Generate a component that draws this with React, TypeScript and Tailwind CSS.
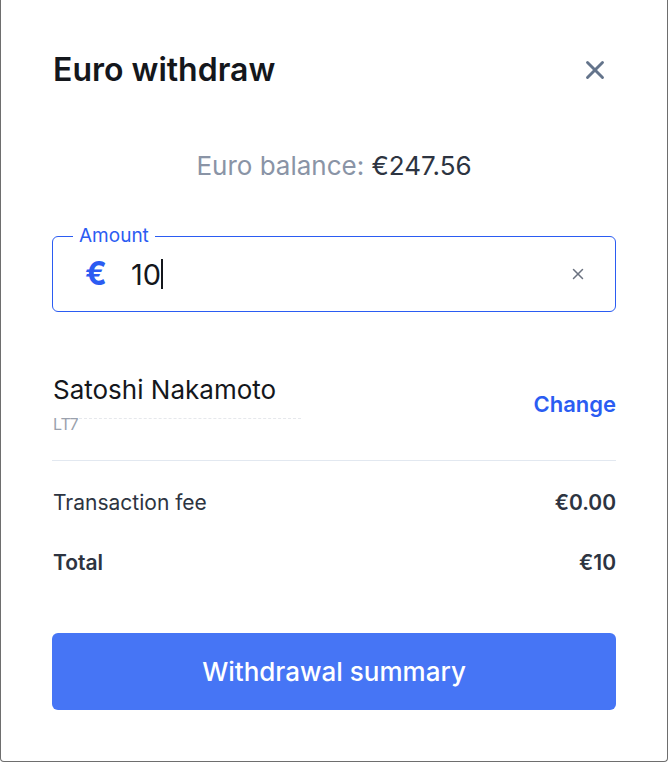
import { X } from 'lucide-react';

export default function App() {
    return (
        <div className="w-[668px] h-[762px] bg-white" style={{ fontFamily: 'Inter, "Noto Sans", sans-serif' }}>
            <div className="h-full border-x border-b border-[#6e6e6e] rounded-b-[4px] px-[51px] pt-[50px] flex flex-col">
                {/* Header */}
                <div className="flex items-center justify-between h-[40px]">
                    <h1 className="ml-[1px] text-[32px] font-semibold text-[#14171c]">Euro withdraw</h1>
                    <button className="text-[#64748b] mr-[6px]">
                        <X size={30} strokeWidth={2.3} />
                    </button>
                </div>

                {/* Balance */}
                <p className="mt-[60px] h-[32px] leading-[32px] text-center text-[26px] text-[#8a94a6]">
                    Euro balance: <span className="text-[#2d3441]">€247.56</span>
                </p>

                {/* Amount input */}
                <div className="relative mt-[54px] h-[76px] rounded-[6px] border border-[#2b5cf2] flex items-center pl-[32px] pr-[28px]">
                    <span className="absolute -top-[13px] left-[20px] px-[6px] bg-white text-[19px] leading-[24px] text-[#2b5cf2]">Amount</span>
                    <span className="text-[32px] font-bold text-[#2b5cf2] leading-none">€</span>
                    <span className="ml-[24px] text-[29px] text-[#14171c] leading-none flex items-center">
                        10<span className="inline-block w-[1.5px] h-[30px] bg-[#14171c]" />
                    </span>
                    <span className="ml-auto text-[#6b7280]">
                        <X size={18} strokeWidth={2} />
                    </span>
                </div>

                {/* Recipient */}
                <div className="mt-[63px] flex items-center justify-between">
                    <div className="ml-[1px]">
                        <p className="h-[30px] leading-[30px] text-[26px] text-[#14171c]">Satoshi Nakamoto</p>
                        <div className="h-[20px] mt-[9px] flex items-start">
                            <span className="text-[16px] leading-[20px] text-[#9aa1ad]">LT7</span>
                            <span className="mt-[4px] w-[222px] border-t border-dashed border-[#e6e8ec]" />
                        </div>
                    </div>
                    <button className="text-[22px] font-semibold text-[#2b5cf2]">Change</button>
                </div>

                <div className="mt-[26px] h-px bg-[#e2e8f0]" />

                {/* Summary rows */}
                <div className="ml-[1px] mt-[28px] flex items-center justify-between h-[28px] text-[21px] text-[#2d3441]">
                    <span>Transaction fee</span>
                    <span className="font-semibold">€0.00</span>
                </div>
                <div className="ml-[1px] mt-[32px] flex items-center justify-between h-[28px] text-[21px] text-[#2d3441] font-semibold">
                    <span>Total</span>
                    <span>€10</span>
                </div>

                <button className="mt-[56px] h-[77px] w-full rounded-[6px] bg-[#4675f5] text-white text-[26px] font-medium">
                    Withdrawal summary
                </button>
            </div>
        </div>
    );
}
